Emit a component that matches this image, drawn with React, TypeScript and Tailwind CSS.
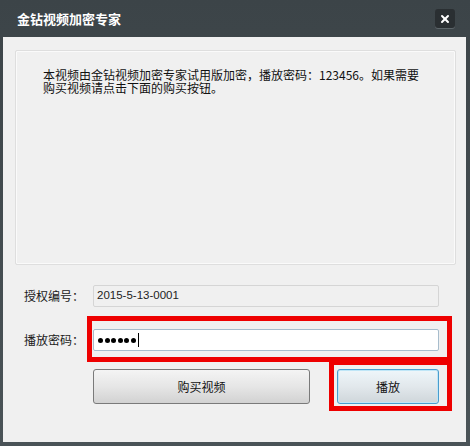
import { X } from 'lucide-react'

const FONT = { fontFamily: '"Noto Sans CJK SC", "Noto Sans", sans-serif' }

function Field({ label, children, className }: { label: string; children: React.ReactNode; className: string }) {
  return (
    <div className="flex items-center">
      <span className="w-[90px] pl-[21px] text-[12px] text-[#1a1a1a]">{label}</span>
      <div className={`flex h-[22px] w-[346px] items-center rounded-[2px] border px-[3px] ${className}`}>{children}</div>
    </div>
  )
}

export default function App() {
  return (
    <div className="flex h-[446px] w-[470px] flex-col bg-gradient-to-b from-[#3c4448] to-[#4a5357] pb-[4px] pl-[3px] pr-[4px]" style={FONT}>
      <div className="flex h-[37px] shrink-0 items-center justify-between pl-[14px] pr-[11px]">
        <span className="text-[13px] font-bold text-white">金钻视频加密专家</span>
        <button className="flex h-[19px] w-[20px] items-center justify-center rounded-[3px] bg-[#2a2f32] shadow-[0_1px_0_#5d666a]">
          <X size={12} strokeWidth={4} className="text-white" />
        </button>
      </div>

      <div className="relative flex flex-1 flex-col bg-[#f0f0f0]">
        <div className="ml-[12px] mr-[10px] mt-[13px] h-[215px] rounded-[2px] border border-[#dedede] bg-[#f0f0f0] pl-[27px] pt-[17px] shadow-[inset_0_0_0_1px_#fafafa]">
          <p className="w-[384px] text-[12px] leading-[13px] text-[#111]">
            本视频由金钻视频加密专家试用版加密，播放密码：123456。如果需要购买视频请点击下面的购买按钮。
          </p>
        </div>

        <div className="mt-[20px]">
          <Field label="授权编号：" className="border-[#d5d5d5] bg-[#f0f0f0]">
            <span className="text-[11.5px] text-[#222]" style={{ fontFamily: '"Liberation Sans", sans-serif' }}>2015-5-13-0001</span>
          </Field>
        </div>

        <div className="mt-[22px]">
          <Field label="播放密码：" className="border-[#a7bccc] bg-white">
            <div className="flex items-center gap-[1.5px] pl-[1px]">
              {[0, 1, 2, 3, 4, 5].map(i => (
                <span key={i} className="h-[5px] w-[5px] rounded-full bg-black" />
              ))}
              <span className="ml-[1px] h-[14px] w-[1px] bg-black" />
            </div>
          </Field>
        </div>

        <div className="ml-[90px] mt-[18px] flex gap-[27px]">
          <button className="h-[35px] w-[217px] rounded-[3px] border border-[#7a7a7a] bg-gradient-to-b from-[#f4f4f4] via-[#e6e6e6] to-[#d2d2d2] text-[12px] text-[#111]">
            购买视频
          </button>
          <button className="h-[35px] w-[102px] rounded-[3px] border border-[#4a9ccd] bg-gradient-to-b from-[#eef6fa] via-[#e2e8ec] to-[#cfd6da] text-[12px] text-[#111] shadow-[inset_0_0_0_1px_#bfe6f7]">
            播放
          </button>
        </div>

        <div className="pointer-events-none absolute left-[84px] top-[279px] h-[46px] w-[365px] border-[5px] border-[#ee0000]" />
        <div className="pointer-events-none absolute left-[326px] top-[323px] h-[51px] w-[123px] border-[5px] border-[#ee0000]" />
      </div>
    </div>
  )
}
